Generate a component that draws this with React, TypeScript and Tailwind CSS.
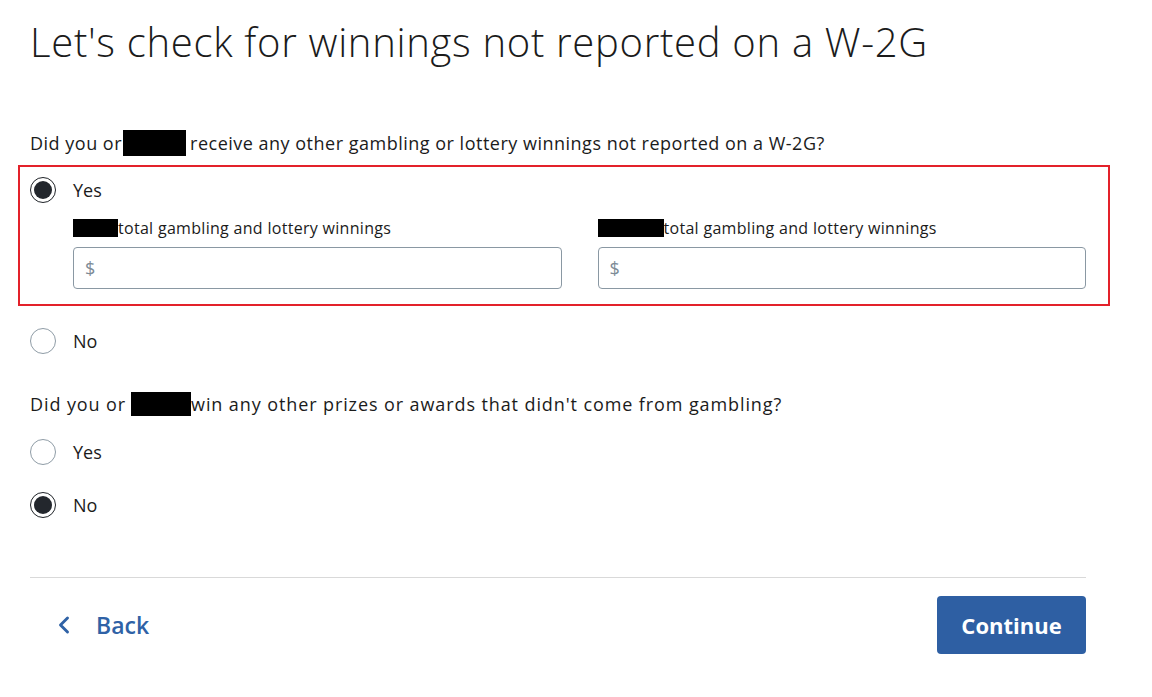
import { ChevronLeft } from 'lucide-react';

function Radio({ checked }: { checked?: boolean }) {
  if (checked) {
    return (
      <span className="w-[26px] h-[26px] rounded-full border-[1.5px] border-[#1f2328] flex items-center justify-center shrink-0">
        <span className="w-[18px] h-[18px] rounded-full bg-[#23272d]"></span>
      </span>
    );
  }
  return <span className="w-[26px] h-[26px] rounded-full border border-[#8f9ca6] shrink-0"></span>;
}

function Option({ label, checked }: { label: string; checked?: boolean }) {
  return (
    <div className="flex items-center h-[26px]">
      <Radio checked={checked} />
      <span className="ml-[17px] text-[18px] text-[#1b1b1b]">{label}</span>
    </div>
  );
}

export default function App() {
  return (
    <div className="min-h-screen bg-white font-['Open_Sans',sans-serif] text-[#1b1b1b]">
      <div className="px-[30px] pt-[17px] w-[1116px]">
        {/* Title */}
        <h1 className="text-[40px] font-light leading-[50px] tracking-[0.7px]">
          Let's check for winnings not reported on a W-2G
        </h1>

        {/* Question 1 */}
        <p className="mt-[63px] text-[18px] leading-[26px] tracking-[0.5px] flex items-center">
          Did you or <span className="inline-block bg-black w-[63px] h-[26px] ml-[1px] mr-[4px]"></span>receive any other gambling or lottery winnings not reported on a W-2G?
        </p>

        <div className="mt-[9px] -ml-[12px] w-[1092px] border-[2px] border-[#e3212a] pl-[10px] pr-[22px] pt-[10px] pb-[15px]">
          <Option label="Yes" checked />
          <div className="mt-[15px] pl-[43px] grid grid-cols-2 gap-x-[36px]">
            <div>
              <div className="text-[16px] leading-[20px] tracking-[0.3px] flex items-center">
                <span className="inline-block bg-black w-[45px] h-[18px]"></span>total gambling and lottery winnings
              </div>
              <div className="mt-[9px] h-[42px] rounded-[4px] border border-[#8a98a3] flex items-center px-[11px] text-[18px] text-[#7d8b96]">$</div>
            </div>
            <div>
              <div className="text-[16px] leading-[20px] tracking-[0.3px] flex items-center">
                <span className="inline-block bg-black w-[66px] h-[18px]"></span>total gambling and lottery winnings
              </div>
              <div className="mt-[9px] h-[42px] rounded-[4px] border border-[#8a98a3] flex items-center px-[11px] text-[18px] text-[#7d8b96]">$</div>
            </div>
          </div>
        </div>

        <div className="mt-[22px]">
          <Option label="No" />
        </div>

        {/* Question 2 */}
        <p className="mt-[37px] text-[18px] leading-[26px] tracking-[0.9px] flex items-center">
          Did you or <span className="inline-block bg-black w-[60px] h-[24px] ml-[5px]"></span>win any other prizes or awards that didn't come from gambling?
        </p>

        <div className="mt-[22px] flex flex-col gap-[27px]">
          <Option label="Yes" />
          <Option label="No" checked />
        </div>

        {/* Footer */}
        <div className="mt-[59px] border-t border-[#d9d9d9] pt-[18px] flex items-center justify-between">
          <button className="flex items-center h-[58px] pl-[20px] text-[#2f62a6] text-[23px] font-semibold">
            <ChevronLeft className="w-[28px] h-[28px]" strokeWidth={2.5} />
            <span className="ml-[18px]">Back</span>
          </button>
          <button className="h-[58px] w-[149px] rounded-[4px] bg-[#2e5fa3] text-white text-[22px] font-bold">
            Continue
          </button>
        </div>
      </div>
    </div>
  );
}
